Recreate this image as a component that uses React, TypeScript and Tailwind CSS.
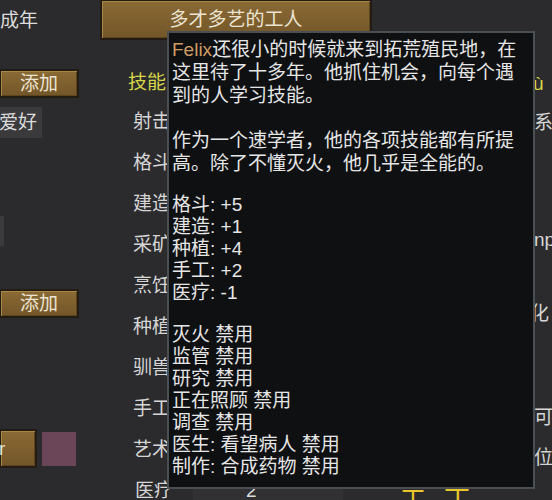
import React from "react";

const font = {
  fontFamily: '"Liberation Sans", "Noto Sans CJK SC", sans-serif',
};

const btn =
  "shrink-0 border-2 border-[#221c12] bg-gradient-to-b from-[#8a6a34] to-[#735629] shadow-[inset_1px_1px_0_#a88645,inset_-1px_-1px_0_#5c441f] text-[#ebe4d2] flex items-center justify-center";

const skills = ["射击", "格斗", "建造", "采矿", "烹饪", "种植", "驯兽", "手工", "艺术"];

export default function App() {
  return (
    <div
      className="relative w-[552px] h-[500px] overflow-hidden bg-[#2b2b2d] text-[19px] leading-[22px] text-[#d6d6d6]"
      style={font}
    >
      <div className="flex items-start">
        {/* left column */}
        <div className="w-[100px] shrink-0 flex flex-col">
          <div className="pt-[10px] h-[32px] shrink-0 whitespace-nowrap text-[#dcdcdc]">成年</div>
          <div className={`${btn} mt-[37px] w-[80px] -ml-[1px] h-[29px]`}>添加</div>
          <div className="shrink-0 mt-[9px] w-[42px] h-[31px] bg-[#3a3a3c] flex items-center whitespace-nowrap text-[#dcdcdc]">
            <span className="-ml-[1px]">爱好</span>
          </div>
          <div className="shrink-0 mt-[78px] w-[4px] h-[30px] bg-[#3b3b3d]" />
          <div className={`${btn} mt-[43px] w-[80px] -ml-[1px] h-[29px]`}>添加</div>
          <div className="shrink-0 mt-[111px] flex items-center gap-[5px]">
            <div className={`${btn} w-[38px] h-[39px] -ml-[1px] justify-start`}>
              <span className="-ml-[2px]">r</span>
            </div>
            <div className="w-[34px] h-[34px] bg-[#6b4658]" />
          </div>
        </div>

        {/* middle column */}
        <div className="w-[434px] shrink-0 flex flex-col">
          <div className={`${btn} w-[272px] h-[41px] -mt-[1px]`}>多才多艺的工人</div>
          <div className="shrink-0 mt-[32px] pl-[28px] h-[22px] text-[#d8d64a] whitespace-nowrap">技能</div>
          <div className="shrink-0 mt-[7px] flex flex-col">
            {skills.map((s) => (
              <div key={s} className="shrink-0 h-[41px] flex items-center pl-[33px] whitespace-nowrap">
                {s}
              </div>
            ))}
            <div className="shrink-0 h-[41px] flex items-center pl-[35px] whitespace-nowrap">
              <span>医疗</span>
              <div className="ml-[20px] w-[150px] h-[26px] bg-[#313133] flex items-center pl-[53px] text-[#dcdcdc]">
                2
              </div>
              <div className="ml-[57px] flex gap-[18px] items-center text-[26px] text-[#e8c62c] pt-[18px]">
                <span>工</span>
                <span>丁</span>
              </div>
            </div>
          </div>
        </div>

        {/* right column */}
        <div className="flex-1 flex flex-col whitespace-nowrap overflow-hidden">
          <div className="mt-[73px] h-[22px] text-[#d8d64a] -ml-[1px]">ù</div>
          <div className="mt-[17px] h-[22px]">系</div>
          <div className="mt-[95px] h-[22px]">np</div>
          <div className="mt-[52px] h-[22px] -ml-[4px]">化</div>
          <div className="mt-[82px] h-[22px]">可</div>
          <div className="mt-[18px] h-[22px]">位</div>
        </div>
      </div>

      {/* tooltip */}
      <div className="absolute left-[167px] top-[31px] w-[368px] h-[458px] bg-[#0e1012] border-2 border-[#4a4f53] pl-[3px] pt-[5px] text-[#e6e6e6] whitespace-nowrap">
        <div className="leading-[23px]">
          <div>
            <span className="text-[#cf9c62]">Felix</span>还很小的时候就来到拓荒殖民地，在
          </div>
          <div>这里待了十多年。他抓住机会，向每个遇</div>
          <div>到的人学习技能。</div>
        </div>
        <div className="leading-[23px] mt-[22px]">
          <div>作为一个速学者，他的各项技能都有所提</div>
          <div>高。除了不懂灭火，他几乎是全能的。</div>
        </div>
        <div className="leading-[22px] mt-[19px]">
          <div>格斗: +5</div>
          <div>建造: +1</div>
          <div>种植: +4</div>
          <div>手工: +2</div>
          <div>医疗: -1</div>
        </div>
        <div className="leading-[22px] mt-[20px]">
          <div>灭火 禁用</div>
          <div>监管 禁用</div>
          <div>研究 禁用</div>
          <div>正在照顾 禁用</div>
          <div>调查 禁用</div>
          <div>医生: 看望病人 禁用</div>
          <div>制作: 合成药物 禁用</div>
        </div>
      </div>
    </div>
  );
}
